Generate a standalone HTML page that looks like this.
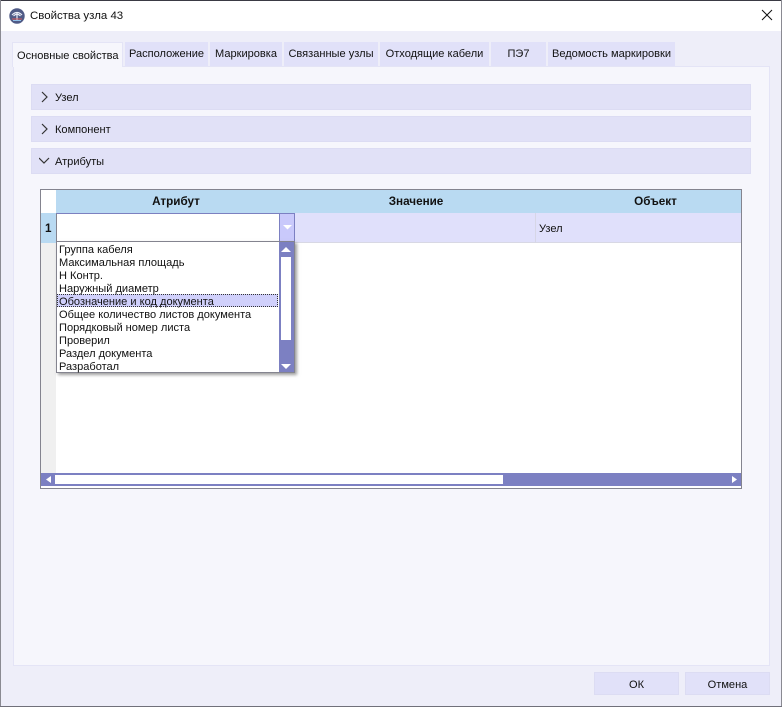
<!DOCTYPE html>
<html><head><meta charset="utf-8">
<style>
html,body{margin:0;padding:0;width:782px;height:707px;overflow:hidden;background:#eeeef9;}
body{position:relative;font-family:"Liberation Sans",sans-serif;font-size:11.05px;color:#111;}
.a{position:absolute;box-sizing:border-box;}
.t{position:absolute;white-space:nowrap;line-height:14px;}
.tab{position:absolute;top:42px;height:24px;background:#e1e1f9;text-align:center;line-height:25px;white-space:nowrap;}
.sec{position:absolute;left:31px;width:720px;height:26px;background:#e1e1f7;border:1px solid #dcdcf3;box-sizing:border-box;}
.sec span{position:absolute;left:23px;top:6px;line-height:15px;}
.sec svg{position:absolute;left:7px;top:6px;}
.it{position:absolute;left:59px;white-space:nowrap;line-height:13px;height:13px;}
.b{font-weight:bold;font-size:11.7px;}
</style></head><body>
<div class="a" style="left:0;top:0;width:782px;height:1px;background:#3a3a44"></div>
<div class="a" style="left:0;top:1px;width:782px;height:30px;background:#fff"></div>
<div class="a" style="left:0;top:0;width:1px;height:707px;background:#8a8a92"></div>
<div class="a" style="left:781px;top:0;width:1px;height:707px;background:#8a8a92"></div>
<div class="a" style="left:0;top:706px;width:782px;height:1px;background:#70707a"></div>

<svg class="a" style="left:9px;top:8px" width="16" height="16" viewBox="0 0 16 16">
<circle cx="8" cy="8" r="7.7" fill="#4f5a86"/>
<path d="M3 7Q8 2 13 7M4.5 8Q8 4.5 11.500 8M8 5V12" stroke="#e8ecf6" stroke-width="1.200" fill="none"/>
<path d="M3 11H13" stroke="#d85a5a" stroke-width="1"/>
<path d="M4 12.500H12" stroke="#8fc0ea" stroke-width="1"/>
</svg>
<div class="t" style="left:30px;top:9px;font-size:11.45px;">Свойства узла 43</div>
<svg class="a" style="left:760px;top:8px" width="14" height="14" viewBox="0 0 14 14"><path d="M2 2L12 12M12 2L2 12" stroke="#111" stroke-width="1" fill="none"/></svg>

<div class="a" style="left:13px;top:66px;width:757px;height:600px;background:#f6f6fc;border:1px solid #e4e4f6"></div>

<div class="a" style="left:12px;top:42px;width:111px;height:25px;background:#f6f6fc;border:1px solid #e4e4f6;border-bottom:0"></div>
<div class="t" style="left:17px;top:49px;">Основные свойства</div>
<div class="tab" style="left:125px;width:83px;">Расположение</div>
<div class="tab" style="left:210px;width:72px;">Маркировка</div>
<div class="tab" style="left:284px;width:94px;">Связанные узлы</div>
<div class="tab" style="left:380px;width:109px;">Отходящие кабели</div>
<div class="tab" style="left:491px;width:55px;">ПЭ7</div>
<div class="tab" style="left:548px;width:127px;">Ведомость маркировки</div>

<div class="sec" style="top:84px"><svg width="12" height="12" viewBox="0 0 12 12"><path d="M3 1L8 6L3 11" stroke="#333" fill="none" stroke-width="1.200"/></svg><span>Узел</span></div>
<div class="sec" style="top:116px"><svg width="12" height="12" viewBox="0 0 12 12"><path d="M3 1L8 6L3 11" stroke="#333" fill="none" stroke-width="1.200"/></svg><span>Компонент</span></div>
<div class="sec" style="top:148px"><svg width="12" height="12" viewBox="0 0 12 12"><path d="M0 3L5 8L10 3" stroke="#333" fill="none" stroke-width="1.200"/></svg><span>Атрибуты</span></div>

<!-- grid -->
<div class="a" style="left:40px;top:189px;width:702px;height:300px;background:#fff;border:1px solid #84848f"></div>
<div class="a" style="left:56px;top:190px;width:685px;height:23px;background:#b9daf2"></div>
<div class="a" style="left:41px;top:190px;width:15px;height:23px;background:#fff"></div>
<div class="a" style="left:41px;top:213px;width:15px;height:30px;background:#b9daf2"></div>
<div class="a" style="left:41px;top:243px;width:15px;height:230px;background:#f0f0f0"></div>
<div class="a" style="left:56px;top:213px;width:685px;height:30px;background:#e0e0fb;border-bottom:1px solid #d8d8e4"></div>
<div class="a" style="left:535px;top:213px;width:1px;height:30px;background:#d6d6e6"></div>
<div class="t b" style="left:56px;width:240px;top:195px;text-align:center;">Атрибут</div>
<div class="t b" style="left:296px;width:240px;top:195px;text-align:center;">Значение</div>
<div class="t b" style="left:536px;width:239px;top:195px;text-align:center;">Объект</div>
<div class="t b" style="left:45px;top:222px;">1</div>
<div class="t" style="left:539px;top:222px;">Узел</div>

<!-- editor -->
<div class="a" style="left:56px;top:213px;width:224px;height:29px;background:#fff;border:1px solid #84848f;border-top:1px solid #7c80c0"></div>
<div class="a" style="left:279px;top:213px;width:16px;height:29px;background:#c9c9fb;border:1px solid #7c80c2"></div>
<svg class="a" style="left:283px;top:225px" width="9" height="5"><path d="M0 0H9L4.500 4.500Z" fill="#fff"/></svg>

<!-- dropdown -->
<div class="a" style="left:56px;top:241px;width:239px;height:132px;background:#fff;border:1px solid #84848f;box-shadow:2px 2px 3px rgba(80,80,80,.55)"></div>
<div class="a" style="left:279px;top:242px;width:15px;height:130px;background:#7c80c2"></div>
<div class="a" style="left:281px;top:257px;width:10px;height:83px;background:#fff"></div>
<svg class="a" style="left:281px;top:247px" width="10" height="5"><path d="M0 5H10L5 0Z" fill="#fff"/></svg>
<svg class="a" style="left:281px;top:364px" width="10" height="5"><path d="M0 0H10L5 5Z" fill="#fff"/></svg>
<div class="a" style="left:57px;top:294px;width:221px;height:13px;background:#d0d0fb;border:1px dotted #333"></div>
<div class="it" style="top:244px">Группа кабеля</div>
<div class="it" style="top:257px">Максимальная площадь</div>
<div class="it" style="top:270px">Н Контр.</div>
<div class="it" style="top:283px">Наружный диаметр</div>
<div class="it" style="top:296px">Обозначение и код документа</div>
<div class="it" style="top:309px">Общее количество листов документа</div>
<div class="it" style="top:322px">Порядковый номер листа</div>
<div class="it" style="top:335px">Проверил</div>
<div class="it" style="top:348px">Раздел документа</div>
<div class="it" style="top:361px">Разработал</div>

<!-- hscroll -->
<div class="a" style="left:41px;top:473px;width:700px;height:13px;background:#7c80c2"></div>
<div class="a" style="left:55px;top:475px;width:448px;height:9px;background:#fff"></div>
<svg class="a" style="left:46px;top:476px" width="5" height="7"><path d="M5 0V7L0 3.500Z" fill="#fff"/></svg>
<svg class="a" style="left:732px;top:476px" width="5" height="7"><path d="M0 0V7L5 3.500Z" fill="#fff"/></svg>

<!-- buttons -->
<div class="a" style="left:594px;top:672px;width:85px;height:23px;background:#e1e1f9;border:1px solid #dcdcf3;text-align:center;line-height:24px;">ОК</div>
<div class="a" style="left:685px;top:672px;width:85px;height:23px;background:#e1e1f9;border:1px solid #dcdcf3;text-align:center;line-height:24px;">Отмена</div>
</body></html>
